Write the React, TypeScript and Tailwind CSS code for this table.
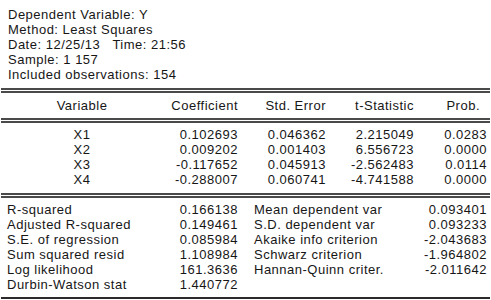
import React from "react";

const DoubleLine = () => (
  <div className="mx-[1px] flex flex-col gap-[1px]">
    <div className="h-[2px] bg-[#4a4a4a]" />
    <div className="h-[2px] bg-[#4a4a4a]" />
  </div>
);

const coefRows = [
  ["X1", "0.102693", "0.046362", "2.215049", "0.0283"],
  ["X2", "0.009202", "0.001403", "6.556723", "0.0000"],
  ["X3", "-0.117652", "0.045913", "-2.562483", "0.0114"],
  ["X4", "-0.288007", "0.060741", "-4.741588", "0.0000"],
];

const statRows = [
  ["R-squared", "0.166138", "Mean dependent var", "0.093401"],
  ["Adjusted R-squared", "0.149461", "S.D. dependent var", "0.093233"],
  ["S.E. of regression", "0.085984", "Akaike info criterion", "-2.043683"],
  ["Sum squared resid", "1.108984", "Schwarz criterion", "-1.964802"],
  ["Log likelihood", "161.3636", "Hannan-Quinn criter.", "-2.011642"],
  ["Durbin-Watson stat", "1.440772", "", ""],
];

export default function App() {
  return (
    <div
      className="w-[491px] h-[300px] bg-white text-[#161616] text-[13px] leading-[15px] tracking-[0.5px] overflow-hidden"
      style={{ fontFamily: '"Liberation Sans", Arial, sans-serif' }}
    >
      <div className="pt-[7px] pl-[8px] whitespace-pre">
        <div>Dependent Variable: Y</div>
        <div>Method: Least Squares</div>
        <div>Date: 12/25/13   Time: 21:56</div>
        <div>Sample: 1 157</div>
        <div>Included observations: 154</div>
      </div>

      <div className="mt-[6px]">
        <DoubleLine />
      </div>

      <div className="grid grid-cols-[164px_74px_88px_88px_73px] h-[25px] items-center">
        <div className="text-center">Variable</div>
        <div className="text-right">Coefficient</div>
        <div className="text-right">Std. Error</div>
        <div className="text-right">t-Statistic</div>
        <div className="text-right pr-[7px]">Prob.</div>
      </div>

      <DoubleLine />

      <div className="pt-[4px] grid grid-cols-[164px_74px_88px_88px_73px]">
        {coefRows.map((r) => (
          <React.Fragment key={r[0]}>
            <div className="text-center">{r[0]}</div>
            <div className="text-right">{r[1]}</div>
            <div className="text-right">{r[2]}</div>
            <div className="text-right">{r[3]}</div>
            <div className="text-right">{r[4]}</div>
          </React.Fragment>
        ))}
      </div>

      <div className="mt-[6px]">
        <DoubleLine />
      </div>

      <div className="pt-[4px] grid grid-cols-[120px_118px_120px_129px]">
        {statRows.map((r) => (
          <React.Fragment key={r[0]}>
            <div className="pl-[7px] whitespace-nowrap">{r[0]}</div>
            <div className="text-right h-[15px]">{r[1]}</div>
            <div className="pl-[16px] whitespace-nowrap">{r[2]}</div>
            <div className="text-right">{r[3]}</div>
          </React.Fragment>
        ))}
      </div>

      <div className="mt-[5px] mx-[1px] h-[2px] bg-[#2a2a2a]" />
    </div>
  );
}
